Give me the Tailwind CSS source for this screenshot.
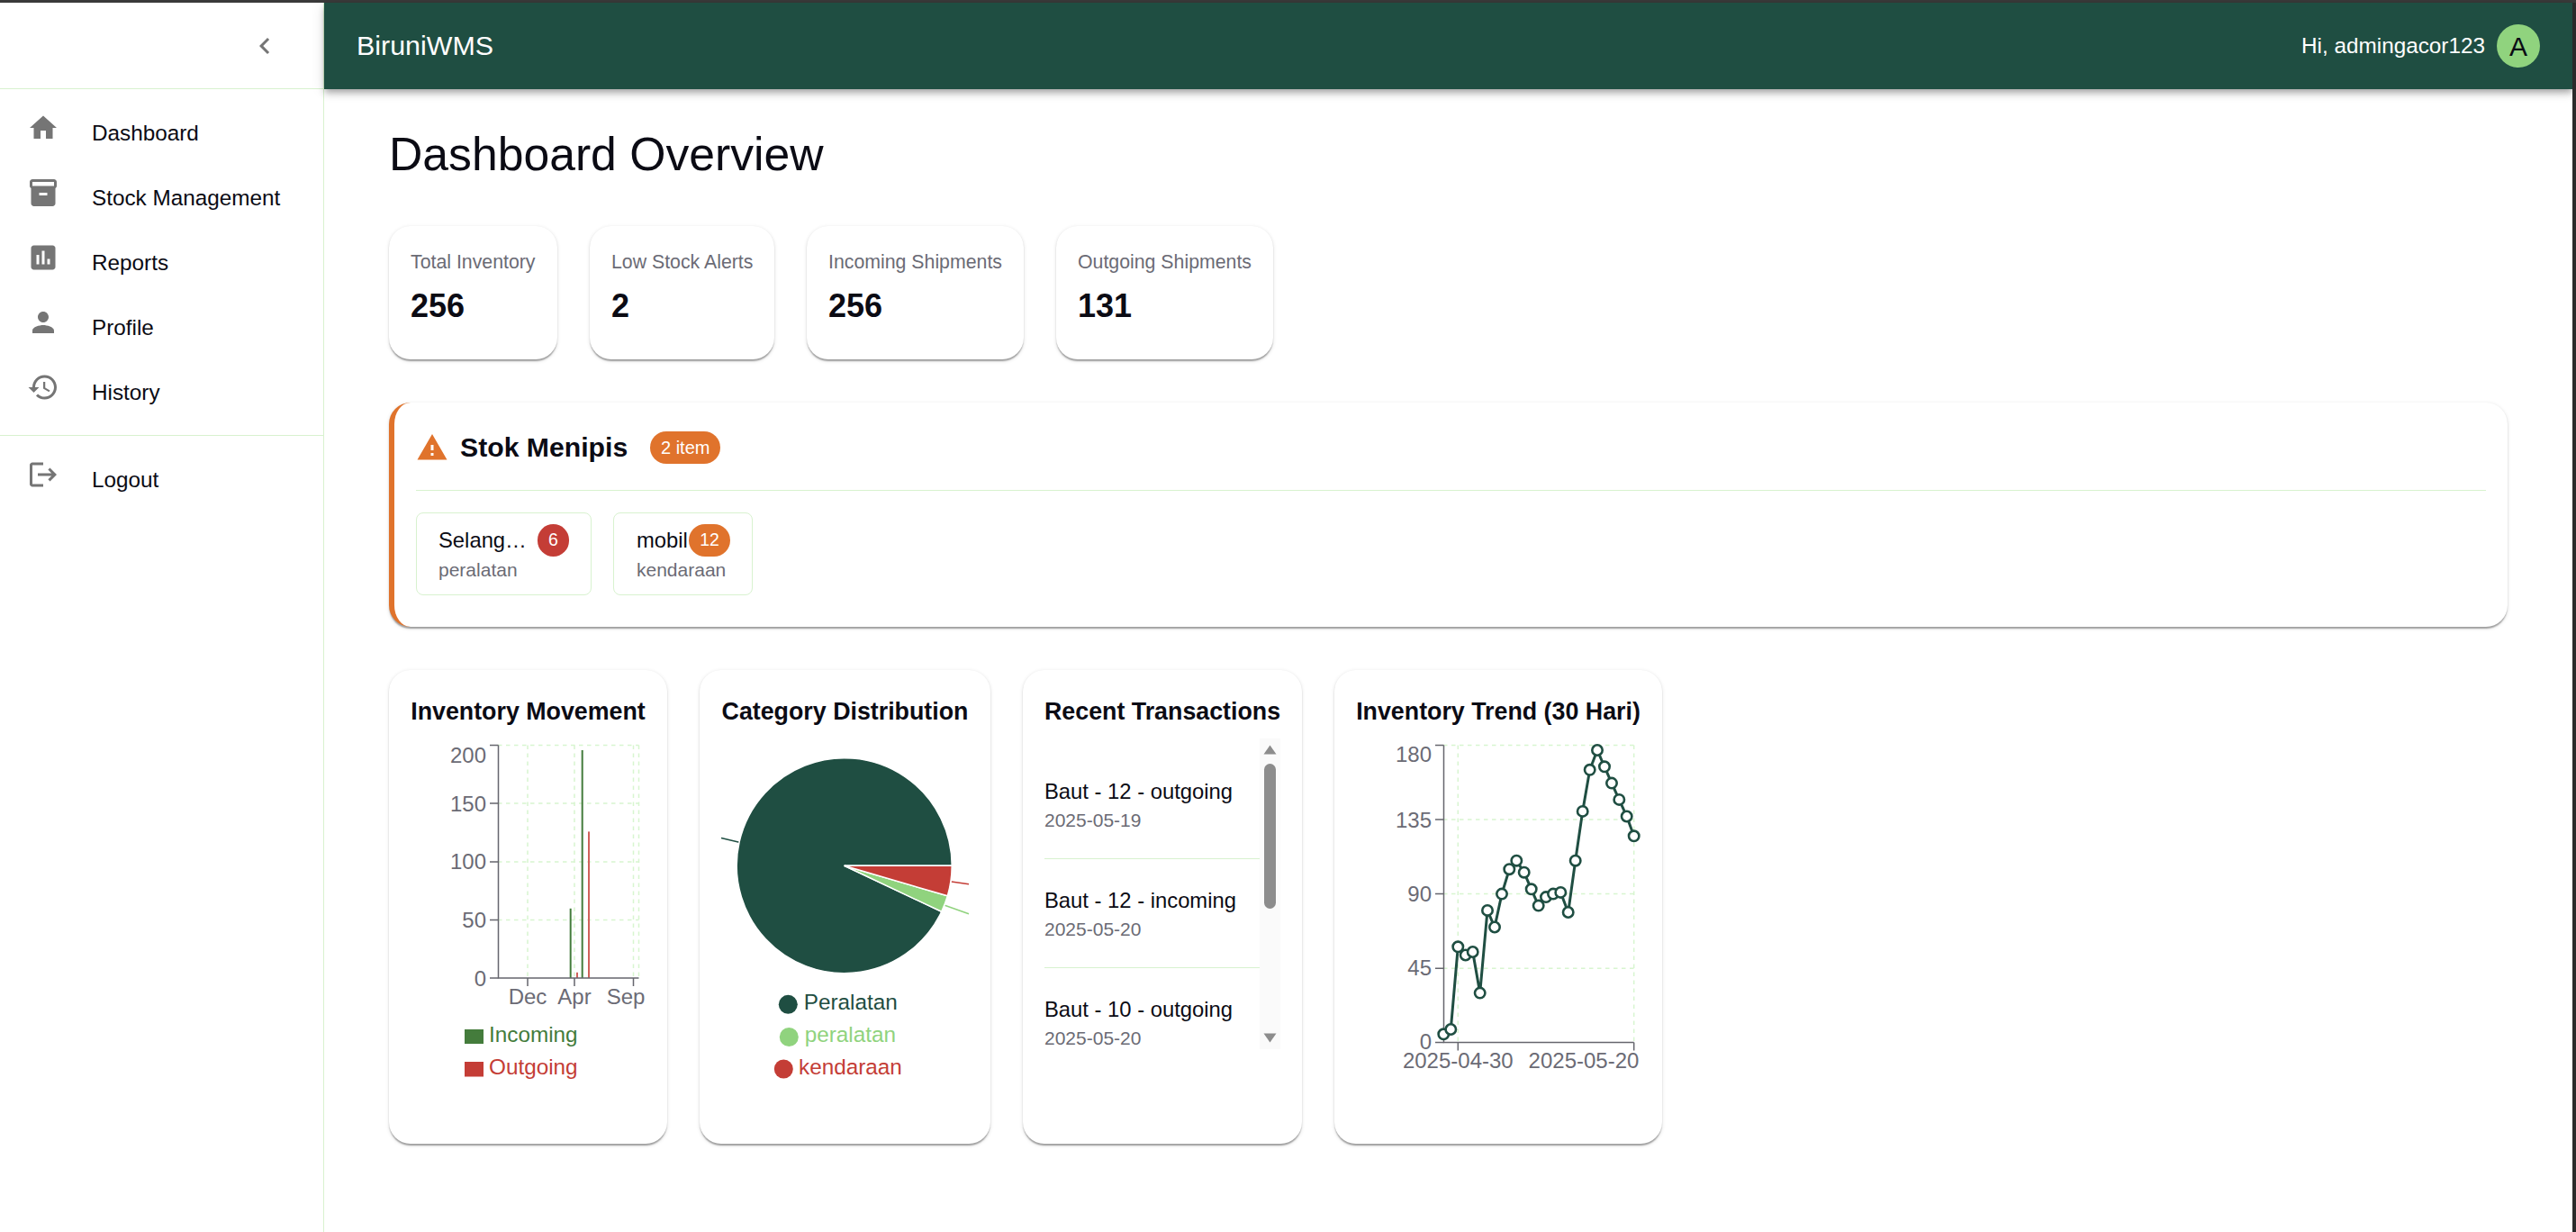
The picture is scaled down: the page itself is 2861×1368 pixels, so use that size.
<!DOCTYPE html>
<html lang="en">
<head>
    <meta charset="UTF-8">
    <title>BiruniWMS</title>
    <script src="https://cdn.jsdelivr.net/npm/@tailwindcss/browser@4"></script>
</head>
<body class="bg-white font-['Liberation_Sans',Arial,sans-serif] text-[#0b0b14] overflow-hidden">
    <div class="h-[3px] bg-[#3a3a3a]"></div>
    <div class="flex h-[1365px]">
        <!-- sidebar -->
        <aside class="w-[360px] shrink-0 border-r border-[#d8f2cf]">
            <div class="h-[96px] flex items-center justify-end pr-[47px] border-b border-[#d8f2cf]">
                <svg class="w-[36px] h-[36px] fill-[#757575]" viewBox="0 0 24 24"><path d="M15.41 7.41 14 6l-6 6 6 6 1.41-1.41L10.83 12z"/></svg>
            </div>
            <nav class="py-[12px] border-b border-[#d8f2cf]">
                <a class="h-[72px] flex items-center pl-[30px] gap-[36px] text-[24.3px]">
                    <svg class="w-[36px] h-[36px] mb-[10px] fill-[#757575]" viewBox="0 0 24 24"><path d="M10 20v-6h4v6h5v-8h3L12 3 2 12h3v8z"/></svg>
                    <span class="pt-[3px]">Dashboard</span>
                </a>
                <a class="h-[72px] flex items-center pl-[30px] gap-[36px] text-[24.3px]">
                    <svg class="w-[36px] h-[36px] mb-[10px] fill-[#757575]" viewBox="0 0 24 24"><path d="M20 2H4c-1 0-2 .9-2 2v3.01c0 .72.43 1.34 1 1.69V20c0 1.1 1.1 2 2 2h14c.9 0 2-.9 2-2V8.7c.57-.35 1-.97 1-1.69V4c0-1.1-1-2-2-2zm-5 12H9v-2h6v2zm5-7H4V4l16-.02V7z"/></svg>
                    <span class="pt-[3px]">Stock Management</span>
                </a>
                <a class="h-[72px] flex items-center pl-[30px] gap-[36px] text-[24.3px]">
                    <svg class="w-[36px] h-[36px] mb-[10px] fill-[#757575]" viewBox="0 0 24 24"><path d="M19 3H5c-1.1 0-2 .9-2 2v14c0 1.1.9 2 2 2h14c1.1 0 2-.9 2-2V5c0-1.1-.9-2-2-2zM9 17H7v-7h2v7zm4 0h-2V7h2v10zm4 0h-2v-4h2v4z"/></svg>
                    <span class="pt-[3px]">Reports</span>
                </a>
                <a class="h-[72px] flex items-center pl-[30px] gap-[36px] text-[24.3px]">
                    <svg class="w-[36px] h-[36px] mb-[10px] fill-[#757575]" viewBox="0 0 24 24"><path d="M12 12c2.21 0 4-1.79 4-4s-1.79-4-4-4-4 1.79-4 4 1.79 4 4 4zm0 2c-2.67 0-8 1.34-8 4v2h16v-2c0-2.66-5.33-4-8-4z"/></svg>
                    <span class="pt-[3px]">Profile</span>
                </a>
                <a class="h-[72px] flex items-center pl-[30px] gap-[36px] text-[24.3px]">
                    <svg class="w-[36px] h-[36px] mb-[10px] fill-[#757575]" viewBox="0 0 24 24"><path d="M13 3c-4.97 0-9 4.03-9 9H1l3.89 3.89.07.14L9 12H6c0-3.87 3.13-7 7-7s7 3.13 7 7-3.13 7-7 7c-1.93 0-3.68-.79-4.94-2.06l-1.42 1.42C8.27 19.99 10.51 21 13 21c4.97 0 9-4.03 9-9s-4.03-9-9-9zm-1 5v5l4.28 2.54.72-1.21-3.5-2.08V8H12z"/></svg>
                    <span class="pt-[3px]">History</span>
                </a>
            </nav>
            <div class="py-[12px]">
                <a class="h-[72px] flex items-center pl-[30px] gap-[36px] text-[24.3px]">
                    <svg class="w-[36px] h-[36px] mb-[10px] fill-[#757575]" viewBox="0 0 24 24"><path d="M17 7l-1.41 1.41L18.17 11H8v2h10.17l-2.58 2.58L17 17l5-5zM4 5h8V3H4c-1.1 0-2 .9-2 2v14c0 1.1.9 2 2 2h8v-2H4V5z"/></svg>
                    <span class="pt-[3px]">Logout</span>
                </a>
            </div>
        </aside>

        <div class="flex-1 min-w-0">
            <!-- top bar -->
            <header class="h-[96px] bg-[#1f4e42] text-white flex items-center justify-between pl-[36px] pr-[36px] shadow-[0_3px_6px_-1.5px_rgba(0,0,0,0.2),0_6px_7.5px_0_rgba(0,0,0,0.14),0_1.5px_15px_0_rgba(0,0,0,0.12)]">
                <div class="text-[30.4px]">BiruniWMS</div>
                <div class="flex items-center gap-[13px]">
                    <span class="text-[24.3px]">Hi, admingacor123</span>
                    <div class="w-[48px] h-[48px] rounded-full bg-[#90d37e] text-[#0b0b14] text-[30px] flex items-center justify-center">A</div>
                </div>
            </header>

            <main class="px-[72px] pt-[40px]">
                <h1 class="text-[51.7px] leading-[65px] mb-[47px]">Dashboard Overview</h1>

                <!-- stat cards -->
                <div class="flex gap-[36px]">
                    <div class="h-[148px] w-[187px] rounded-[24px] bg-white p-[24px] shadow-[0_3px_1.5px_-1.5px_rgba(0,0,0,0.2),0_1.5px_1.5px_0_rgba(0,0,0,0.14),0_1.5px_4.5px_0_rgba(0,0,0,0.12)]">
                        <div class="text-[21.3px] leading-[33px] text-[#6b6b75] whitespace-nowrap">Total Inventory</div>
                        <div class="text-[36px] leading-[63px] font-bold">256</div>
                    </div>
                    <div class="h-[148px] w-[205px] rounded-[24px] bg-white p-[24px] shadow-[0_3px_1.5px_-1.5px_rgba(0,0,0,0.2),0_1.5px_1.5px_0_rgba(0,0,0,0.14),0_1.5px_4.5px_0_rgba(0,0,0,0.12)]">
                        <div class="text-[21.3px] leading-[33px] text-[#6b6b75] whitespace-nowrap">Low Stock Alerts</div>
                        <div class="text-[36px] leading-[63px] font-bold">2</div>
                    </div>
                    <div class="h-[148px] w-[241px] rounded-[24px] bg-white p-[24px] shadow-[0_3px_1.5px_-1.5px_rgba(0,0,0,0.2),0_1.5px_1.5px_0_rgba(0,0,0,0.14),0_1.5px_4.5px_0_rgba(0,0,0,0.12)]">
                        <div class="text-[21.3px] leading-[33px] text-[#6b6b75] whitespace-nowrap">Incoming Shipments</div>
                        <div class="text-[36px] leading-[63px] font-bold">256</div>
                    </div>
                    <div class="h-[148px] w-[241px] rounded-[24px] bg-white p-[24px] shadow-[0_3px_1.5px_-1.5px_rgba(0,0,0,0.2),0_1.5px_1.5px_0_rgba(0,0,0,0.14),0_1.5px_4.5px_0_rgba(0,0,0,0.12)]">
                        <div class="text-[21.3px] leading-[33px] text-[#6b6b75] whitespace-nowrap">Outgoing Shipments</div>
                        <div class="text-[36px] leading-[63px] font-bold">131</div>
                    </div>
                </div>

                <!-- low stock alert -->
                <section class="mt-[48px] h-[249px] rounded-[24px] bg-white border-l-[6px] border-[#e0732c] pl-[24px] pr-[24px] pt-[24px] shadow-[0_3px_1.5px_-1.5px_rgba(0,0,0,0.2),0_1.5px_1.5px_0_rgba(0,0,0,0.14),0_1.5px_4.5px_0_rgba(0,0,0,0.12)]">
                    <div class="h-[51px] flex items-center">
                        <svg class="w-[36px] h-[36px] fill-[#e0732c]" viewBox="0 0 24 24"><path d="M1 21h22L12 2 1 21zm12-3h-2v-2h2v2zm0-4h-2v-4h2v4z"/></svg>
                        <h2 class="ml-[13px] text-[30.2px] font-bold">Stok Menipis</h2>
                        <span class="ml-[25px] h-[36px] w-[78px] rounded-full bg-[#e0732c] text-white text-[20px] flex items-center justify-center">2 item</span>
                    </div>
                    <div class="mt-[22px] border-t border-[#d8f2cf]"></div>
                    <div class="mt-[24px] flex gap-[24px]">
                        <div class="h-[92px] rounded-[8px] border border-[#d8f2cf] pl-[24px] pr-[24px] pt-[12px]">
                            <div class="flex items-center h-[36px]">
                                <span class="w-[100px] text-[23.8px]">Selang…</span>
                                <span class="ml-[10px] w-[35px] h-[36px] rounded-full bg-[#c43d36] text-white text-[19.5px] flex items-center justify-center">6</span>
                            </div>
                            <div class="text-[21px] leading-[30px] text-[#6b6b75]">peralatan</div>
                        </div>
                        <div class="h-[92px] rounded-[8px] border border-[#d8f2cf] pl-[25px] pr-[24px] pt-[12px]">
                            <div class="flex items-center h-[36px]">
                                <span class="w-[58px] text-[23.8px]">mobil</span>
                                <span class="w-[46px] h-[36px] rounded-full bg-[#e0732c] text-white text-[19.5px] flex items-center justify-center">12</span>
                            </div>
                            <div class="text-[21px] leading-[30px] text-[#6b6b75]">kendaraan</div>
                        </div>
                    </div>
                </section>

                <!-- chart cards -->
                <div class="mt-[48px] flex gap-[36px]">
                    <div class="w-[309px] h-[526px] rounded-[24px] bg-white pt-[24px] shadow-[0_3px_1.5px_-1.5px_rgba(0,0,0,0.2),0_1.5px_1.5px_0_rgba(0,0,0,0.14),0_1.5px_4.5px_0_rgba(0,0,0,0.12)]">
                        <h3 class="h-[42px] leading-[45px] text-center text-[26.8px] font-bold">Inventory Movement</h3>
                        <svg class="block" width="309" height="459" viewBox="432 811 309 459" font-size="24" fill="#6b6b75">
                            <g stroke="#d8f5d0" stroke-width="1.5" stroke-dasharray="4.5 4.5" fill="none">
                                <path d="M553 828.5H709.5M553 893H709.5M553 958H709.5M553 1022.5H709.5"/>
                                <path d="M586 828.5V1087M638 828.5V1087M703.5 828.5V1087M709.5 828.5V1087"/>
                            </g>
                            <rect x="632.7" y="1009.8" width="2" height="77.2" fill="#447c3c"/>
                            <rect x="640" y="1080.8" width="2" height="6.2" fill="#d0605a"/>
                            <rect x="645.7" y="834" width="2" height="253" fill="#447c3c"/>
                            <rect x="653" y="924.4" width="2" height="162.6" fill="#d0605a"/>
                            <g stroke="#66666e" stroke-width="1.5" fill="none">
                                <path d="M553.5 828.5V1087H709.5"/>
                                <path d="M544 828.5H553.5M544 893H553.5M544 958H553.5M544 1022.5H553.5M544 1087H553.5"/>
                                <path d="M586 1087V1096M638 1087V1096M703.5 1087V1096"/>
                            </g>
                            <g text-anchor="end">
                                <text x="540" y="848">200</text>
                                <text x="540" y="902">150</text>
                                <text x="540" y="966">100</text>
                                <text x="540" y="1030.5">50</text>
                                <text x="540" y="1095.5">0</text>
                            </g>
                            <g text-anchor="middle">
                                <text x="586" y="1116">Dec</text>
                                <text x="638" y="1116">Apr</text>
                                <text x="695" y="1116">Sep</text>
                            </g>
                            <rect x="516" y="1144" width="21" height="16" fill="#447c3c"/>
                            <text x="543" y="1158" fill="#447c3c" font-size="24.3">Incoming</text>
                            <rect x="516" y="1180" width="21" height="16.5" fill="#c43d36"/>
                            <text x="543" y="1194" fill="#c43d36" font-size="24.3">Outgoing</text>
                        </svg>
                    </div>

                    <div class="w-[323px] h-[526px] rounded-[24px] bg-white pt-[24px] shadow-[0_3px_1.5px_-1.5px_rgba(0,0,0,0.2),0_1.5px_1.5px_0_rgba(0,0,0,0.14),0_1.5px_4.5px_0_rgba(0,0,0,0.12)]">
                        <h3 class="h-[42px] leading-[45px] text-center text-[26.8px] font-bold">Category Distribution</h3>
                        <svg class="block" width="323" height="459" viewBox="777 811 323 459" font-size="24.3">
                            <g stroke-width="1.5" fill="none">
                                <path d="M821 936.3L801 931.4" stroke="#1f4e42"/>
                                <path d="M1056.7 980L1076 982.7" stroke="#c43d36"/>
                                <path d="M1049.3 1006.3L1076 1015.8" stroke="#90d37e"/>
                            </g>
                            <g stroke="#fff" stroke-width="1.5">
                                <path d="M937.7 962.3L1045.7 1013.3A119.5 119.5 0 1 1 1057.2 962.3Z" fill="#1f4e42"/>
                                <path d="M937.7 962.3L1052.4 995.8A119.5 119.5 0 0 1 1045.7 1013.3Z" fill="#90d37e"/>
                                <path d="M937.7 962.3L1057.2 962.3A119.5 119.5 0 0 1 1052.4 995.8Z" fill="#c43d36"/>
                            </g>
                            <circle cx="875.3" cy="1116.3" r="10.5" fill="#1f4e42"/>
                            <text x="892.7" y="1122" fill="#1f4e42">Peralatan</text>
                            <circle cx="876.3" cy="1152.5" r="10.5" fill="#90d37e"/>
                            <text x="893.7" y="1157.8" fill="#90d37e">peralatan</text>
                            <circle cx="870.3" cy="1188" r="10.5" fill="#c43d36"/>
                            <text x="887" y="1194" fill="#c43d36">kendaraan</text>
                        </svg>
                    </div>

                    <div class="w-[310px] h-[526px] rounded-[24px] bg-white pt-[24px] px-[24px] shadow-[0_3px_1.5px_-1.5px_rgba(0,0,0,0.2),0_1.5px_1.5px_0_rgba(0,0,0,0.14),0_1.5px_4.5px_0_rgba(0,0,0,0.12)]">
                        <h3 class="h-[42px] leading-[45px] text-center text-[26.8px] font-bold whitespace-nowrap">Recent Transactions</h3>
                        <div class="mt-[10px] h-[345px] flex">
                            <ul class="w-[239px] pt-[13px] overflow-hidden">
                                <li class="h-[121px] pt-[28px] border-b border-[#d8f2cf]">
                                    <div class="text-[23.8px] leading-[36px]">Baut - 12 - outgoing</div>
                                    <div class="-mt-[2px] text-[21px] leading-[31px] text-[#6b6b75]">2025-05-19</div>
                                </li>
                                <li class="h-[121px] pt-[28px] border-b border-[#d8f2cf]">
                                    <div class="text-[23.8px] leading-[36px]">Baut - 12 - incoming</div>
                                    <div class="-mt-[2px] text-[21px] leading-[31px] text-[#6b6b75]">2025-05-20</div>
                                </li>
                                <li class="h-[121px] pt-[28px]">
                                    <div class="text-[23.8px] leading-[36px]">Baut - 10 - outgoing</div>
                                    <div class="-mt-[2px] text-[21px] leading-[31px] text-[#6b6b75]">2025-05-20</div>
                                </li>
                            </ul>
                            <!-- scrollbar -->
                            <div class="w-[23px] bg-[#fafafa] flex flex-col items-center justify-between py-[7px]">
                                <div class="w-[14px] flex flex-col items-center gap-[10px]">
                                    <svg class="w-[15px] h-[11px] fill-[#8c8c8c]" viewBox="0 0 15 11"><path d="M7.5 0.5L14.5 10.5H0.5Z"/></svg>
                                    <div class="w-[13px] h-[161px] rounded-full bg-[#8c8c8c]"></div>
                                </div>
                                <svg class="w-[15px] h-[11px] fill-[#8c8c8c]" viewBox="0 0 15 11"><path d="M0.5 0.5H14.5L7.5 10.5Z"/></svg>
                            </div>
                        </div>
                    </div>

                    <div class="w-[364px] h-[526px] rounded-[24px] bg-white pt-[24px] shadow-[0_3px_1.5px_-1.5px_rgba(0,0,0,0.2),0_1.5px_1.5px_0_rgba(0,0,0,0.14),0_1.5px_4.5px_0_rgba(0,0,0,0.12)]">
                        <h3 class="h-[42px] leading-[45px] text-center text-[26.8px] font-bold">Inventory Trend (30 Hari)</h3>
                        <svg class="block" width="364" height="459" viewBox="1482 811 364 459" font-size="24" fill="#6b6b75">
                            <g stroke="#d8f5d0" stroke-width="1.5" stroke-dasharray="4.5 4.5" fill="none">
                                <path d="M1603 828.5H1814.7M1603 911H1814.7M1603 993.6H1814.7M1603 1076.2H1814.7"/>
                                <path d="M1619.3 828.5V1158.5M1814.7 828.5V1158.5"/>
                            </g>
                            <g stroke="#66666e" stroke-width="1.5" fill="none">
                                <path d="M1603.5 828.5V1158.5H1814.7"/>
                                <path d="M1594 828.5H1603.5M1594 911H1603.5M1594 993.6H1603.5M1594 1076.2H1603.5M1594 1158.5H1603.5"/>
                                <path d="M1619.3 1158.5V1167.6M1814.7 1158.5V1167.6"/>
                            </g>
                            <g text-anchor="end">
                                <text x="1590" y="847">180</text>
                                <text x="1590" y="919.8">135</text>
                                <text x="1590" y="1002.4">90</text>
                                <text x="1590" y="1084.3">45</text>
                                <text x="1590" y="1166.2">0</text>
                            </g>
                            <g text-anchor="middle">
                                <text x="1619.3" y="1187">2025-04-30</text>
                                <text x="1759" y="1187">2025-05-20</text>
                            </g>
                            <polyline fill="none" stroke="#1f4e42" stroke-width="3" points="1603.3,1149.3 1611.3,1144 1619.3,1052.3 1627.7,1061.5 1635.7,1058 1643.7,1103.6 1652,1011.9 1660,1030.5 1668,993.6 1676.3,966.2 1684.3,956.7 1692.7,969.7 1700.7,988.3 1708.7,1006.6 1717,997.1 1725,993.6 1733.3,991.9 1741.7,1014 1749.7,956.7 1757.7,901.9 1765.7,855.8 1774,834 1782,852.3 1790,870.6 1798.3,888.9 1806.7,907.5 1814.7,929.3"/>
                            <g fill="#fff" stroke="#1f4e42" stroke-width="2.6">
                                <circle cx="1603.3" cy="1149.3" r="5.7"/><circle cx="1611.3" cy="1144" r="5.7"/><circle cx="1619.3" cy="1052.3" r="5.7"/>
                                <circle cx="1627.7" cy="1061.5" r="5.7"/><circle cx="1635.7" cy="1058" r="5.7"/><circle cx="1643.7" cy="1103.6" r="5.7"/>
                                <circle cx="1652" cy="1011.9" r="5.7"/><circle cx="1660" cy="1030.5" r="5.7"/><circle cx="1668" cy="993.6" r="5.7"/>
                                <circle cx="1676.3" cy="966.2" r="5.7"/><circle cx="1684.3" cy="956.7" r="5.7"/><circle cx="1692.7" cy="969.7" r="5.7"/>
                                <circle cx="1700.7" cy="988.3" r="5.7"/><circle cx="1708.7" cy="1006.6" r="5.7"/><circle cx="1717" cy="997.1" r="5.7"/>
                                <circle cx="1725" cy="993.6" r="5.7"/><circle cx="1733.3" cy="991.9" r="5.7"/><circle cx="1741.7" cy="1014" r="5.7"/>
                                <circle cx="1749.7" cy="956.7" r="5.7"/><circle cx="1757.7" cy="901.9" r="5.7"/><circle cx="1765.7" cy="855.8" r="5.7"/>
                                <circle cx="1774" cy="834" r="5.7"/><circle cx="1782" cy="852.3" r="5.7"/><circle cx="1790" cy="870.6" r="5.7"/>
                                <circle cx="1798.3" cy="888.9" r="5.7"/><circle cx="1806.7" cy="907.5" r="5.7"/><circle cx="1814.7" cy="929.3" r="5.7"/>
                            </g>
                        </svg>
                    </div>
                </div>
            </main>
        </div>
        <div class="w-[4px] shrink-0 bg-[#2b2b2b]"></div>
    </div>
</body>
</html>
